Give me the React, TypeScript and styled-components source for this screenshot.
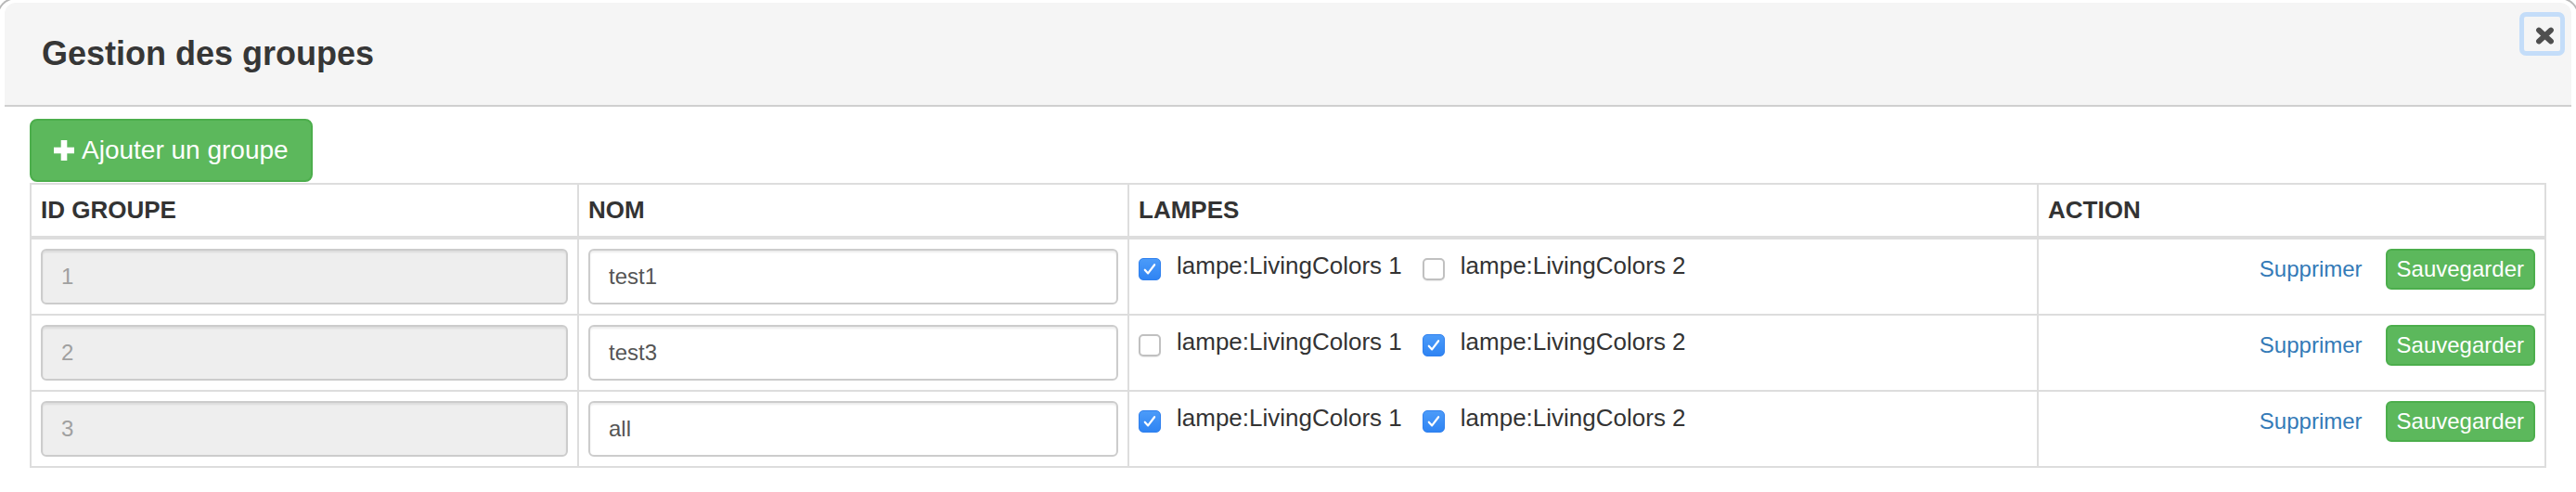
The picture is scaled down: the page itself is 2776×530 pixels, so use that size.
import React from "react";
import styled, { createGlobalStyle } from "styled-components";

const GlobalStyle = createGlobalStyle`
  html, body {
    margin: 0;
    padding: 0;
    background: #ffffff;
    overflow: hidden;
  }
  body {
    font-family: "Liberation Sans", Arial, Helvetica, sans-serif;
    color: #333333;
  }
  * { box-sizing: border-box; }
`;

const Page = styled.div`
  width: 2776px;
  height: 530px;
  overflow: hidden;
`;

const Modal = styled.div`
  margin: -3px 0 0 -4px;
  width: 2784px;
  height: 560px;
  border: 2px solid rgba(0, 0, 0, 0.28);
  border-radius: 22px;
  background: #ffffff;
  padding: 4px 7px 0 7px;
`;

const Header = styled.div`
  height: 112px;
  background: #f5f5f5;
  border-bottom: 2px solid #cfcfcf;
  border-radius: 12px 12px 0 0;
  padding: 0 7px 0 40px;
  display: flex;
  justify-content: space-between;
  align-items: center;
`;

const Title = styled.h4`
  margin: 0;
  font-size: 36px;
  line-height: 52px;
  font-weight: 700;
  color: #363636;
`;

const CloseButton = styled.button`
  align-self: flex-start;
  margin-top: 10px;
  width: 49px;
  height: 47px;
  border: 5px solid #c4ddf9;
  border-radius: 7px;
  background: transparent;
  padding: 3px 0 0 6px;
  display: flex;
  align-items: center;
  justify-content: center;
  cursor: pointer;
`;

const Body = styled.div`
  padding: 13px 0 0 27px;
`;

const AddButton = styled.button`
  display: inline-flex;
  align-items: center;
  gap: 8px;
  height: 68px;
  padding: 0 24px;
  margin: 0 0 1px 0;
  border: 2px solid #4cae4c;
  border-radius: 8px;
  background: #5cb85c;
  color: #ffffff;
  font-family: "Liberation Sans", Arial, sans-serif;
  font-size: 28px;
  line-height: 40px;
  cursor: pointer;
`;

const Grid = styled.div`
  width: 2712px;
  display: grid;
  grid-template-columns: 588px 591px 978px 545px;
  gap: 2px;
  background: #dddddd;
  border: 2px solid #dddddd;
`;

const HeadCell = styled.div`
  background: #ffffff;
  padding: 8px 10px;
  margin-bottom: 2px;
  font-size: 26px;
  line-height: 39px;
  font-weight: 700;
  color: #333333;
`;

const Cell = styled.div<{ $align?: "start" | "end" }>`
  background: #ffffff;
  padding: 10px;
  height: 80px;
  display: flex;
  align-items: flex-start;
  justify-content: ${(p) => (p.$align === "end" ? "flex-end" : "flex-start")};
`;

const TextInput = styled.input<{ $disabled?: boolean }>`
  width: 100%;
  height: 60px;
  border: 2px solid #cccccc;
  border-radius: 6px;
  padding: 0 20px;
  font-family: "Liberation Sans", Arial, sans-serif;
  font-size: 24px;
  color: ${(p) => (p.$disabled ? "#a0a0a0" : "#555555")};
  background: ${(p) => (p.$disabled ? "#eeeeee" : "#ffffff")};
  box-shadow: inset 0 2px 2px rgba(0, 0, 0, 0.075);
  outline: none;
  -webkit-text-fill-color: ${(p) => (p.$disabled ? "#a0a0a0" : "#555555")};
  opacity: 1;
`;

const LampOption = styled.label`
  display: inline-flex;
  align-items: flex-start;
  margin-right: 22px;
  font-size: 26px;
  line-height: 37px;
  color: #333333;
  white-space: nowrap;
`;

const CheckBox = styled.span<{ $checked: boolean }>`
  width: 24px;
  height: 24px;
  margin-top: 10px;
  margin-right: 17px;
  border-radius: 5px;
  flex: none;
  display: flex;
  align-items: center;
  justify-content: center;
  background: ${(p) =>
    p.$checked ? "linear-gradient(#4b9bf9, #2f84f3)" : "#ffffff"};
  border: ${(p) => (p.$checked ? "1px solid #2f80ee" : "2px solid #c0c0c0")};
  box-shadow: ${(p) =>
    p.$checked ? "none" : "0 1px 1px rgba(0, 0, 0, 0.08)"};
`;

const LinkButton = styled.button`
  border: 2px solid transparent;
  background: none;
  padding: 2px 10px;
  font-family: "Liberation Sans", Arial, sans-serif;
  font-size: 24px;
  line-height: 36px;
  color: #337ab7;
  cursor: pointer;
  margin-right: 13px;
`;

const SaveButton = styled.button`
  border: 2px solid #4cae4c;
  border-radius: 6px;
  background: #5cb85c;
  padding: 2px 10px;
  font-family: "Liberation Sans", Arial, sans-serif;
  font-size: 24px;
  line-height: 36px;
  color: #ffffff;
  cursor: pointer;
`;

const PlusIcon = () => (
  <svg width="22" height="22" viewBox="0 0 22 22" aria-hidden="true">
    <rect x="0" y="7.7" width="22" height="6.6" fill="#ffffff" />
    <rect x="7.7" y="0" width="6.6" height="22" fill="#ffffff" />
  </svg>
);

const CloseIcon = () => (
  <svg width="21" height="19" viewBox="0 0 21 19" aria-hidden="true">
    <path
      d="M4 3.5 L17 15.5 M17 3.5 L4 15.5"
      stroke="#4f4f4f"
      strokeWidth="5.8"
      strokeLinecap="round"
      fill="none"
    />
  </svg>
);

const CheckMark = () => (
  <svg width="24" height="24" viewBox="0 0 24 24" aria-hidden="true">
    <path
      d="M6.3 12.8 L10 16.8 L17.6 6.8"
      stroke="#ffffff"
      strokeWidth="2.4"
      strokeLinecap="round"
      strokeLinejoin="round"
      fill="none"
    />
  </svg>
);

type Group = { id: number; name: string; lamps: boolean[] };

const groups: Group[] = [
  { id: 1, name: "test1", lamps: [true, false] },
  { id: 2, name: "test3", lamps: [false, true] },
  { id: 3, name: "all", lamps: [true, true] },
];

const lampNames = ["lampe:LivingColors 1", "lampe:LivingColors 2"];

export default function App() {
  return (
    <Page>
      <GlobalStyle />
      <Modal>
        <Header>
          <Title>Gestion des groupes</Title>
          <CloseButton aria-label="Fermer">
            <CloseIcon />
          </CloseButton>
        </Header>
        <Body>
          <AddButton>
            <PlusIcon />
            Ajouter un groupe
          </AddButton>
          <Grid>
            <HeadCell>ID GROUPE</HeadCell>
            <HeadCell>NOM</HeadCell>
            <HeadCell>LAMPES</HeadCell>
            <HeadCell>ACTION</HeadCell>
            {groups.map((g) => (
              <React.Fragment key={g.id}>
                <Cell>
                  <TextInput $disabled disabled defaultValue={String(g.id)} />
                </Cell>
                <Cell>
                  <TextInput defaultValue={g.name} />
                </Cell>
                <Cell>
                  {lampNames.map((lamp, i) => (
                    <LampOption key={lamp}>
                      <CheckBox $checked={g.lamps[i]}>
                        {g.lamps[i] && <CheckMark />}
                      </CheckBox>
                      {lamp}
                    </LampOption>
                  ))}
                </Cell>
                <Cell $align="end">
                  <LinkButton>Supprimer</LinkButton>
                  <SaveButton>Sauvegarder</SaveButton>
                </Cell>
              </React.Fragment>
            ))}
          </Grid>
        </Body>
      </Modal>
    </Page>
  );
}
